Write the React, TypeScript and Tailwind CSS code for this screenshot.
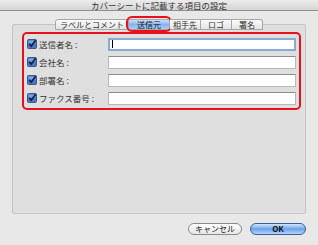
const font = { fontFamily: '"Noto Sans CJK JP", "Liberation Sans", sans-serif' };

const tabs = ['ラベルとコメント', '送信元', '相手先', 'ロゴ', '署名'];
const tabWidths = ['w-[74px]', 'w-[41px]', 'w-[31px]', 'w-[31px]', 'w-[31px]'];

const fields = ['送信者名 :', '会社名 :', '部署名 :', 'ファクス番号 :'];

function Check() {
  return (
    <svg width="10" height="10" viewBox="0 0 10 10" className="shrink-0">
      <rect x="0.5" y="0.5" width="9" height="9" rx="1" fill="#4a78c0" stroke="#35588f" />
      <rect x="1.5" y="1.5" width="7" height="3" fill="#7fa6de" />
      <path d="M2.2 4.8 L4.2 7.2 L8.6 1.2" fill="none" stroke="#0d1c3a" strokeWidth="1.6" />
    </svg>
  );
}

export default function App() {
  return (
    <div className="w-[318px] h-[245px] bg-[#e8e8e8] flex flex-col overflow-hidden" style={font}>
      {/* Title bar */}
      <div className="h-[11px] bg-gradient-to-b from-[#ececec] to-[#d4d4d4] border-b border-[#8e8e8e] flex items-center justify-center text-[8.5px] leading-none text-[#333]">
        カバーシートに記載する項目の設定
      </div>

      {/* Tabs */}
      <div className="mt-[8px] ml-[55px] flex h-[11px] relative z-10">
        {tabs.map((t, i) => {
          const active = i === 1;
          return (
            <div
              key={t}
              className={`${tabWidths[i]} relative flex items-center justify-center text-[8px] leading-none border-y border-r border-[#a8a8a8] ${i === 0 ? 'border-l rounded-tl-[3px]' : ''} ${i === 4 ? 'rounded-tr-[3px]' : ''} ${active ? 'bg-gradient-to-b from-[#cfe2fa] via-[#84b4ef] to-[#a9cdf7] text-[#111]' : 'bg-gradient-to-b from-[#fbfbfb] to-[#e4e4e4] text-[#333]'}`}
            >
              {t}
              {active && (
                <div className="absolute -left-[3px] -right-[3px] -top-[4px] -bottom-[3px] border-2 border-[#e8101a] rounded-[6px]" />
              )}
            </div>
          );
        })}
      </div>

      {/* Group box */}
      <div className="ml-[12px] w-[294px] h-[190px] -mt-[6px] bg-[#dfdfdf] border border-[#c4c4c4] rounded-[2px] pt-[7px] pl-[9px]">
        <div className="w-[279px] h-[78px] border-2 border-[#e8101a] rounded-[5px] pt-[3px] pl-[3px] flex flex-col gap-[4px]">
          {fields.map((f, i) => (
            <div key={f} className="flex items-center h-[14px]">
              <Check />
              <span className="ml-[2px] w-[69px] text-[8.5px] leading-none text-[#333] whitespace-nowrap">{f}</span>
              <div
                className={`w-[188px] h-[13px] bg-white ${i === 0 ? 'border-2 border-[#8aa9d6] flex items-center pl-[2px]' : 'border border-[#b8b8b8] border-t-[#8c8c8c]'}`}
              >
                {i === 0 && <div className="w-px h-[8px] bg-black" />}
              </div>
            </div>
          ))}
        </div>
      </div>

      {/* Buttons */}
      <div className="mt-[9px] ml-[188px] flex gap-[8px]">
        <button className="w-[54px] h-[12px] rounded-full border border-[#8a8a8a] bg-gradient-to-b from-white to-[#e6e6e6] text-[8px] leading-none text-[#222] flex items-center justify-center">
          キャンセル
        </button>
        <button className="w-[56px] h-[12px] rounded-full border border-[#3a5f9a] bg-gradient-to-b from-[#d4e6fb] via-[#6aa2e8] to-[#b2d4fa] text-[8px] font-bold leading-none text-[#111] flex items-center justify-center">
          OK
        </button>
      </div>
    </div>
  );
}
